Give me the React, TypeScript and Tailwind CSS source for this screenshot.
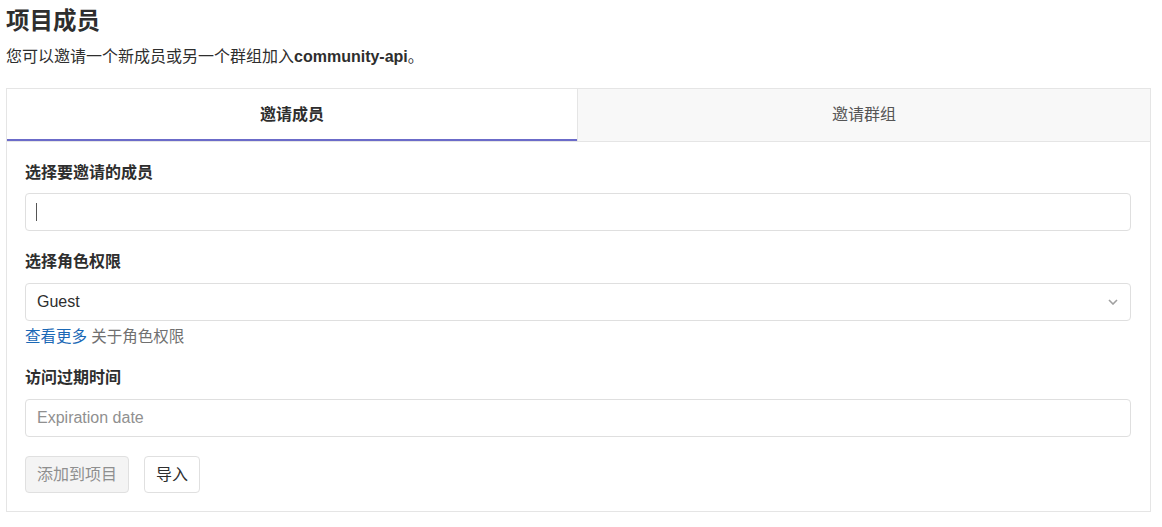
import React from 'react';

const font = { fontFamily: '"Liberation Sans", "Noto Sans CJK SC", sans-serif' };

export default function App() {
  return (
    <div className="min-h-[527px] bg-white px-[6px] text-[#2e2e2e]" style={font}>
      <h1 className="pt-[5px] text-[23.5px] leading-[32px] font-bold">项目成员</h1>
      <p className="mt-[8px] text-[16px] leading-[24px]">
        您可以邀请一个新成员或另一个群组加入<strong className="font-bold">community-api</strong>。
      </p>

      <div className="mt-[19px] w-[1145px] border border-[#e5e5e5]">
        <div className="flex border-b border-[#e5e5e5]">
          <button className="flex h-[52px] w-[570px] items-center justify-center border-b-2 border-[#6b6bc9] bg-white pt-[2px] text-[16px] font-bold">
            邀请成员
          </button>
          <button className="flex h-[52px] flex-1 items-center justify-center border-l border-[#e5e5e5] bg-[#f8f8f8] text-[16px] text-[#555]">
            邀请群组
          </button>
        </div>

        <div className="px-[18px] pt-[19px] pb-[18px]">
          <label className="block text-[16px] leading-[24px] font-bold">选择要邀请的成员</label>
          <div className="mt-[8px] flex h-[38px] w-[1106px] items-center rounded-[4px] border border-[#dfdfdf] px-[10px]">
            <span className="h-[18px] w-px bg-[#555]" />
          </div>

          <label className="mt-[19px] block text-[16px] leading-[24px] font-bold">选择角色权限</label>
          <div className="mt-[9px] flex h-[38px] w-[1106px] items-center justify-between rounded-[4px] border border-[#dfdfdf] px-[11px] text-[16px]">
            <span>Guest</span>
            <svg width="10" height="6" viewBox="0 0 10 6" className="mr-[1px]">
              <polyline points="1,1 5,5 9,1" fill="none" stroke="#a0a0a0" strokeWidth="1.6" />
            </svg>
          </div>
          <p className="mt-[4px] text-[15.5px] leading-[24px] text-[#707070]">
            <a className="text-[#1b69b6]">查看更多</a> 关于角色权限
          </p>

          <label className="mt-[17px] block text-[16px] leading-[24px] font-bold">访问过期时间</label>
          <div className="mt-[9px] flex h-[38px] w-[1106px] items-center rounded-[4px] border border-[#dfdfdf] px-[11px] text-[16px] text-[#909090]">
            Expiration date
          </div>

          <div className="mt-[19px] flex gap-[15px]">
            <button className="h-[37px] rounded-[4px] border border-[#e0e0e0] bg-[#f4f4f4] px-[11px] text-[16px] text-[#8f8f8f]">
              添加到项目
            </button>
            <button className="h-[37px] rounded-[4px] border border-[#e0e0e0] bg-white px-[11px] text-[16px] text-[#2e2e2e]">
              导入
            </button>
          </div>
        </div>
      </div>
    </div>
  );
}
